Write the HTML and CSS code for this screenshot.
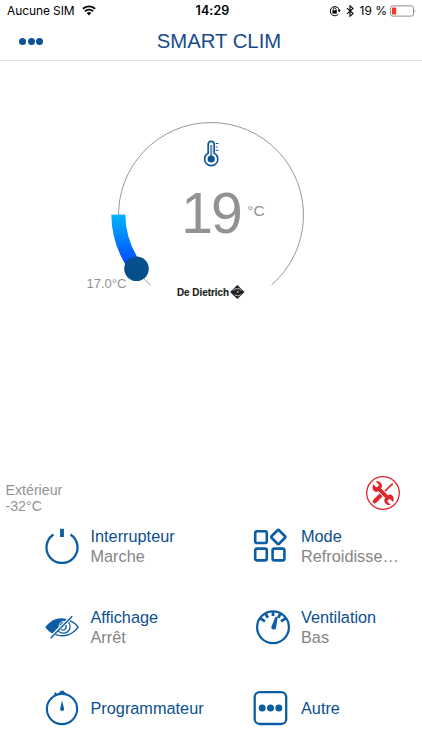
FILE: index.html
```
<!DOCTYPE html>
<html lang="fr">
<head>
  <meta charset="UTF-8" />
  <meta name="viewport" content="width=device-width, initial-scale=1.0" />
  <title>SMART CLIM</title>
  <link rel="stylesheet" href="styles.css">
</head>
<body>
  <div class="app">
    <!-- Status bar -->
    <div class="status-bar">
      <div class="status-left">
        <span class="carrier">Aucune SIM</span>
        <svg class="wifi" width="14" height="11" viewBox="0 0 14 11">
          <path d="M0.9 3.8a8.8 8.8 0 0 1 12.2 0M3 6.2a5.8 5.8 0 0 1 8 0" fill="none" stroke="#000" stroke-width="1.9"/>
          <path d="M4.7 8a3.4 3.4 0 0 1 4.6 0L7 10.4z"/>
        </svg>
      </div>
      <div class="clock">14:29</div>
      <div class="status-right">
        <svg class="lock" width="12" height="12" viewBox="0 0 12 12">
          <path d="M9.3 9.3A4.6 4.6 0 1 1 10.4 5.2" fill="none" stroke="#000" stroke-width="1"/>
          <path d="M8.6 5h3.2l-1.6 2.2z"/>
          <rect x="3.4" y="5.3" width="4.4" height="3.3"/>
          <path d="M4.2 5.5V4.4a1.4 1.4 0 0 1 2.8 0v1.1" fill="none" stroke="#000" stroke-width="0.9"/>
        </svg>
        <svg class="bluetooth" width="8" height="12" viewBox="0 0 8 12">
          <path d="M1 3.2l6 5.4L4 11.2V0.8l3 2.6L1 8.8" fill="none" stroke="#000" stroke-width="1.1"/>
        </svg>
        <span class="percent">19 %</span>
        <svg class="battery" width="27" height="12" viewBox="0 0 27 12">
          <rect x="0.5" y="0.9" width="23" height="10.2" rx="2" fill="none" stroke="#8f8f8f"/>
          <rect x="2" y="2.4" width="4.2" height="7.2" rx="0.6" fill="#ff3529"/>
          <path d="M24.7 4.2q1.6 1.8 0 3.6z" fill="#8f8f8f"/>
        </svg>
      </div>
    </div>

    <!-- Title bar -->
    <header class="nav-bar">
      <button class="menu-btn" aria-label="Menu">
        <span></span><span></span><span></span>
      </button>
      <h1>SMART CLIM</h1>
    </header>

    <!-- Temperature dial -->
    <main class="dial">
      <svg width="260" height="200" viewBox="80 110 260 200">
        <defs>
          <linearGradient id="cold" x1="0" y1="215" x2="0" y2="265" gradientUnits="userSpaceOnUse">
            <stop offset="0" stop-color="#00b4ff"/>
            <stop offset="1" stop-color="#0048ff"/>
          </linearGradient>
        </defs>
        <path d="M150.5 285A92.5 92.5 0 1 1 271.5 285" fill="none" stroke="#999" stroke-width="1"/>
        <path d="M118.3 214.6A92.7 92.7 0 0 0 136.5 268.5" fill="none" stroke="url(#cold)" stroke-width="14"/>
        <circle cx="136.5" cy="268.8" r="12.3" fill="#054f8c"/>

        <!-- thermometer -->
        <g fill="none" stroke="#135896">
          <path d="M208.2 153.2V144.3a3 3 0 0 1 6 0V153.2a6.6 6.6 0 1 1-6 0z" stroke-width="1.7"/>
          <path d="M211.2 145V157" stroke-width="2.2" stroke="#6291bb"/>
          <path d="M215.8 143.5h2.6M215.8 147h1.8M215.8 150.3h2.6" stroke-width="1"/>
        </g>
        <circle cx="211.2" cy="159" r="3.6" fill="#0b5394"/>

        <text class="temp" x="181.3" y="232.5">19</text>
        <text class="unit" x="247.3" y="216">°C</text>
        <text class="setpoint" x="86.5" y="288">17.0°C</text>

        <!-- brand -->
        <text class="brand" x="177" y="295.7" textLength="52" lengthAdjust="spacingAndGlyphs">De Dietrich</text>
        <path d="M237.3 285l7.2 7-7.2 7-7.2-7z" fill="#231f20"/>
        <path d="M232.8 290.4q2.5-2 4.9-1.8 2.6 0.2 3.8 1.8M240.6 294.4a4 4 0 0 1-6 0" fill="none" stroke="#fff" stroke-width="0.7"/>
        <circle cx="237.7" cy="291.8" r="1.1" fill="#999"/>
      </svg>
    </main>

    <!-- Outdoor temperature and maintenance -->
    <section class="info">
      <div class="outdoor">
        <div>Extérieur</div>
        <div>-32°C</div>
      </div>
      <button class="service-btn" aria-label="Maintenance">
        <svg width="36" height="36" viewBox="0 0 36 36">
          <circle cx="18" cy="18" r="16.3" fill="none" stroke="#e0262c" stroke-width="1.3"/>
          <path d="M26.8 9.4l-8.3 8.2" stroke="#e0262c" stroke-width="1.7" fill="none"/>
          <path d="M28.3 7.9l-1 3.2-1.8-1.8z" fill="#e0262c"/>
          <path d="M16.6 19.4l-6.8 6.8" stroke="#e0262c" stroke-width="4.2" stroke-linecap="round"/>
          <path d="M13.6 13.6L23 23" stroke="#fff" stroke-width="5.4"/>
          <path d="M12.6 12.6L24 24" stroke="#e0262c" stroke-width="3.8"/>
          <path d="M8.2 9.2l3.2 3.1 1.9-0.7 0.6-2-3.2-3.1c3.8-1 7.1 1.9 6.2 5.8l-4.5 4.5c-3.8 0.8-5.9-3.5-4.2-7.6z" fill="#e0262c"/>
          <path d="M28.1 27.1l-3.2-3.1-1.9 0.7-0.6 2 3.2 3.1c-3.8 1-7.1-1.9-6.2-5.8l4.5-4.5c3.8-0.8 5.9 3.5 4.2 7.6z" fill="#e0262c"/>
        </svg>
      </button>
    </section>

    <!-- Controls -->
    <section class="controls">
      <div class="control">
        <svg class="icon" width="36" height="36" viewBox="0 0 36 36">
          <path d="M9.5 6.5A15.5 15.5 0 1 0 26.5 6.5" fill="none" stroke="#0c5da5" stroke-width="2.3"/>
          <path d="M18 0.8V9" stroke="#0c5da5" stroke-width="3.8"/>
        </svg>
        <div class="label">
          <div class="name">Interrupteur</div>
          <div class="value">Marche</div>
        </div>
      </div>

      <div class="control">
        <svg class="icon" width="36" height="36" viewBox="0 0 36 36">
          <g fill="none" stroke="#0c5da5" stroke-width="2.6">
            <rect x="3.2" y="3.2" width="11.6" height="11.8" rx="1.7"/>
            <rect x="3.2" y="20.6" width="11.6" height="11.8" rx="1.7"/>
            <rect x="20.6" y="20.6" width="11.8" height="11.8" rx="1.7"/>
            <rect x="21" y="3.7" width="10.6" height="10.6" rx="1.4" transform="rotate(45 26.3 9)"/>
          </g>
        </svg>
        <div class="label">
          <div class="name">Mode</div>
          <div class="value">Refroidisse…</div>
        </div>
      </div>

      <div class="control">
        <svg class="icon" width="36" height="36" viewBox="0 0 36 36">
          <path d="M1.3 18.2C6.5 10.7 14.8 7.5 22.8 10L8.3 24.5C5.5 22.9 3 20.8 1.3 18.2z" fill="#0c5da5"/>
          <path d="M15 17.5a5.8 5.8 0 0 1 5-5.2" fill="none" stroke="#fff" stroke-width="1"/>
          <path d="M25.8 11.7C29.2 13.1 32 15.3 34.2 18.2C28.8 25.6 20.4 28.4 11.6 25.6" fill="none" stroke="#0c5da5" stroke-width="1.4"/>
          <path d="M24.5 13.2a6.7 6.7 0 0 1-10.3 8.6M21.7 16a3.3 3.3 0 0 1-4.6 4.5" fill="none" stroke="#0c5da5" stroke-width="1.3"/>
          <path d="M28.2 7.3L6.6 29.3" stroke="#0c5da5" stroke-width="1.5"/>
        </svg>
        <div class="label">
          <div class="name">Affichage</div>
          <div class="value">Arrêt</div>
        </div>
      </div>

      <div class="control">
        <svg class="icon" width="38" height="36" viewBox="0 0 38 36">
          <circle cx="21" cy="18.2" r="15.9" fill="none" stroke="#0c5da5" stroke-width="2.2"/>
          <path d="M8.4 9.4l4.6 3M13.2 4.2l2.7 4.6M21 2.2v4.8M28.8 4.2l-2.7 4.6M33.6 9.4l-4.6 3" stroke="#0c5da5" stroke-width="2.8"/>
          <path d="M23.3 8h2.4L24 19.2a2.4 2.4 0 1 1-4.3-2.3z" fill="#0c5da5"/>
        </svg>
        <div class="label label-wide">
          <div class="name">Ventilation</div>
          <div class="value">Bas</div>
        </div>
      </div>

      <div class="control">
        <svg class="icon" width="36" height="36" viewBox="0 0 36 36">
          <circle cx="18" cy="19" r="15.1" fill="none" stroke="#0c5da5" stroke-width="2.1"/>
          <path d="M16.3 0.8h3.8v1.5h1.5v2.4h-6.9V2.3h1.6zM10.2 3.2l1.4-0.9 1.8 2-2.8 1.3z" fill="#0c5da5"/>
          <path d="M18.1 10.3l2 8.6a2 2 0 1 1-4 0z" fill="#0c5da5"/>
        </svg>
        <div class="label">
          <div class="name">Programmateur</div>
        </div>
      </div>

      <div class="control">
        <svg class="icon" width="36" height="36" viewBox="0 0 36 36">
          <rect x="2.7" y="2.1" width="31.5" height="31.9" rx="5" fill="none" stroke="#0c5da5" stroke-width="2.3"/>
          <g fill="#0c5da5">
            <circle cx="10.2" cy="18" r="3.5"/>
            <circle cx="18.5" cy="18" r="3.5"/>
            <circle cx="26.8" cy="18" r="3.5"/>
          </g>
        </svg>
        <div class="label">
          <div class="name">Autre</div>
        </div>
      </div>
    </section>
  </div>
</body>
</html>
```

FILE: styles.css
```
* {
  box-sizing: border-box;
}

body {
  margin: 0;
  background: #fff;
  font-family: "Liberation Sans", Arial, sans-serif;
  color: #0b4f8e;
}

button {
  padding: 0;
  border: none;
  background: none;
  cursor: pointer;
}

svg {
  display: block;
  flex: none;
}

.app {
  width: 422px;
  height: 750px;
  overflow: hidden;
}

/* Status bar */
.status-bar {
  height: 22px;
  padding: 0 5px 1px 7px;
  display: grid;
  grid-template-columns: 1fr auto 1fr;
  align-items: center;
  font-family: Inter, sans-serif;
  font-size: 12px;
  color: #000;
}

.status-left,
.status-right {
  display: flex;
  align-items: center;
}

.status-left {
  gap: 7px;
}

.status-right {
  justify-content: flex-end;
}

.carrier {
  letter-spacing: -0.1px;
}

.clock {
  padding-left: 1px;
  font-size: 12.5px;
  font-weight: 600;
  letter-spacing: 0.1px;
}

.lock {
  margin-right: 5px;
}

.bluetooth {
  margin-right: 6px;
}

.percent {
  margin-right: 3px;
}

/* Title bar */
.nav-bar {
  height: 39px;
  padding: 0 19px;
  display: grid;
  grid-template-columns: 1fr auto 1fr;
  align-items: center;
  border-bottom: 1px solid #e4e4e4;
}

.nav-bar h1 {
  margin: 0;
  padding-left: 16px;
  font-size: 20.3px;
  font-weight: normal;
  color: #174a8b;
}

.menu-btn {
  display: flex;
  gap: 1.7px;
}

.menu-btn span {
  width: 7px;
  height: 7px;
  border-radius: 50%;
  background: #0c5296;
}

/* Dial */
.dial {
  height: 421px;
  padding: 49px 0 0 80px;
}

.temp {
  font-size: 57px;
  letter-spacing: -2px;
  fill: #929292;
}

.unit {
  font-size: 15.5px;
  fill: #929292;
}

.setpoint {
  font-size: 13px;
  fill: #929292;
}

.brand {
  font-size: 11px;
  font-weight: bold;
  fill: #231f20;
  stroke: #231f20;
  stroke-width: 0.2px;
}

/* Outdoor row */
.info {
  height: 33px;
  padding: 0 21.5px 0 5.5px;
  display: flex;
  justify-content: space-between;
}

.outdoor {
  font-size: 14.2px;
  line-height: 16px;
  color: #929292;
}

.service-btn {
  align-self: flex-start;
  margin-top: -7px;
}

/* Controls */
.controls {
  padding: 11px 0 0 44px;
  display: grid;
  grid-template-columns: 208px 1fr;
  grid-auto-rows: 81px;
}

.control {
  display: flex;
  gap: 10.5px;
  height: 40px;
  align-items: center;
}

.control:nth-child(even) {
  gap: 13px;
}

.control .label-wide {
  margin-left: -2px;
}

.name,
.value {
  font-size: 16.3px;
  line-height: 20px;
  white-space: nowrap;
}

.value {
  color: #858585;
}
```
